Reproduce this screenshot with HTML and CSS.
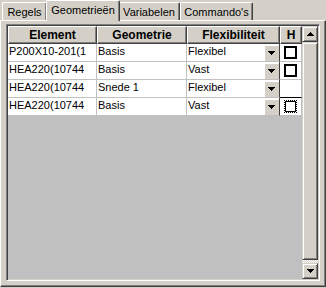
FILE: index.html
```html
<!DOCTYPE html>
<html>
<head>
<meta charset="utf-8">
<link rel="stylesheet" href="styles.css">
</head>
<body>
<div class="tabs">
  <div class="tab t1">Regels</div>
  <div class="tab sel">Geometrieën</div>
  <div class="tab t3">Variabelen</div>
  <div class="tab t4">Commando's</div>
</div>
<div class="panel">
  <div class="grid">
    <div class="table">
      <div class="hd">Element</div>
      <div class="hd">Geometrie</div>
      <div class="hd">Flexibiliteit</div>
      <div class="hd">H</div>

      <div class="c">P200X10-201(1</div>
      <div class="c">Basis</div>
      <div class="c fx"><span>Flexibel</span><span class="dd"><svg width="7" height="4" viewBox="0 0 7 4"><path d="M0 0h7v1h-1v1h-1v1h-1v1h-1v-1h-1v-1h-1v-1h-1z"/></svg></span></div>
      <div class="c h"><span class="chk"></span></div>

      <div class="c">HEA220(10744</div>
      <div class="c">Basis</div>
      <div class="c fx"><span>Vast</span><span class="dd"><svg width="7" height="4" viewBox="0 0 7 4"><path d="M0 0h7v1h-1v1h-1v1h-1v1h-1v-1h-1v-1h-1v-1h-1z"/></svg></span></div>
      <div class="c h"><span class="chk"></span></div>

      <div class="c">HEA220(10744</div>
      <div class="c">Snede 1</div>
      <div class="c fx"><span>Flexibel</span><span class="dd"><svg width="7" height="4" viewBox="0 0 7 4"><path d="M0 0h7v1h-1v1h-1v1h-1v1h-1v-1h-1v-1h-1v-1h-1z"/></svg></span></div>
      <div class="c h prev"></div>

      <div class="c">HEA220(10744</div>
      <div class="c">Basis</div>
      <div class="c fx"><span>Vast</span><span class="dd"><svg width="7" height="4" viewBox="0 0 7 4"><path d="M0 0h7v1h-1v1h-1v1h-1v1h-1v-1h-1v-1h-1v-1h-1z"/></svg></span></div>
      <div class="c h"><span class="chk focus"></span></div>
    </div>
    <div class="vs">
      <div class="sb"><svg width="7" height="4" viewBox="0 0 7 4"><path d="M3 0h1v1h1v1h1v1h1v1H0V3h1V2h1V1h1z"/></svg></div>
      <div class="thumb"></div>
      <div class="track"></div>
      <div class="sb"><svg width="7" height="4" viewBox="0 0 7 4"><path d="M0 0h7v1h-1v1h-1v1h-1v1h-1v-1h-1v-1h-1v-1h-1z"/></svg></div>
    </div>
  </div>
</div>
</body>
</html>
```
FILE: styles.css
```css
* { box-sizing: border-box; }
html, body { margin: 0; }
body {
  width: 326px;
  height: 288px;
  overflow: hidden;
  background: #d4d0c8;
  color: #000;
  font: 11px "Liberation Sans", Arial, sans-serif;
}

.tabs {
  display: flex;
  align-items: flex-end;
  height: 20px;
  padding-left: 2px;
}
.tab {
  height: 18px;
  padding-top: 2px;
  line-height: 15px;
  text-align: center;
  white-space: nowrap;
  border-top: 1px solid #fff;
  border-left: 1px solid #fff;
  border-right: 1px solid #404040;
  box-shadow: inset -1px 0 #808080;
  border-radius: 2px 2px 0 0;
}
.t1 { width: 45px; }
.t3 { width: 62px; }
.t4 { width: 73px; }
.sel {
  width: 74px;
  height: 21px;
  margin: 0 -2px -1px -1px;
  position: relative;
  z-index: 1;
  background: #d4d0c8;
}

.panel {
  height: 267px;
  border: 1px solid;
  border-color: #fff #404040 #404040 #fff;
  box-shadow: inset -1px -1px #808080;
  padding: 3px 5px 5px 5px;
}

.grid {
  height: 257px;
  display: flex;
  border: 1px solid;
  border-color: #808080 #fff #fff #808080;
  box-shadow: inset 1px 1px #404040, inset -1px -1px #d4d0c8;
  padding: 1px;
  background: #c0c0c0;
}

.table {
  width: 294px;
  display: grid;
  grid-template-columns: 89px 90px 93px 22px;
  grid-auto-rows: 18px;
  align-self: flex-start;
}
.hd {
  background: #d4d0c8;
  border-top: 1px solid #fff;
  border-left: 1px solid #fff;
  border-right: 1px solid #404040;
  border-bottom: 1px solid #404040;
  box-shadow: inset -1px -1px #808080;
  font-weight: bold;
  font-size: 12px;
  line-height: 15px;
  padding-top: 1px;
  text-align: center;
  white-space: nowrap;
  overflow: hidden;
}
.c {
  background: #fff;
  border-right: 1px solid #c0c0c0;
  border-bottom: 1px solid #c0c0c0;
  padding-left: 1px;
  line-height: 15px;
  white-space: nowrap;
  overflow: hidden;
}
.fx {
  display: flex;
  justify-content: space-between;
  align-items: flex-start;
  border-right-color: #404040;
}
.dd {
  width: 15px;
  height: 16px;
  margin-top: 1px;
  background: #d4d0c8;
  box-shadow: inset 1px 1px #fff;
  display: flex;
  align-items: center;
  justify-content: center;
}
.h {
  display: flex;
  align-items: center;
  justify-content: center;
  padding-left: 0;
}
.prev { border-bottom-color: #000; }
.chk {
  width: 13px;
  height: 13px;
  border: 2px solid #000;
  background: #fff;
}
.chk.focus {
  border: 1px dotted #000;
  box-shadow: inset 0 0 0 1px #000;
}

.vs {
  width: 16px;
  display: flex;
  flex-direction: column;
}
.sb, .thumb {
  background: #d4d0c8;
  border: 1px solid;
  border-color: #d4d0c8 #404040 #404040 #d4d0c8;
  box-shadow: inset 1px 1px #fff, inset -1px -1px #808080;
}
.sb {
  height: 16px;
  display: flex;
  align-items: center;
  justify-content: center;
}
.thumb { flex: 1; }
.track {
  height: 3px;
  background: repeating-conic-gradient(#fff 0 25%, #d4d0c8 0 50%) 0 0 / 2px 2px;
}
```
